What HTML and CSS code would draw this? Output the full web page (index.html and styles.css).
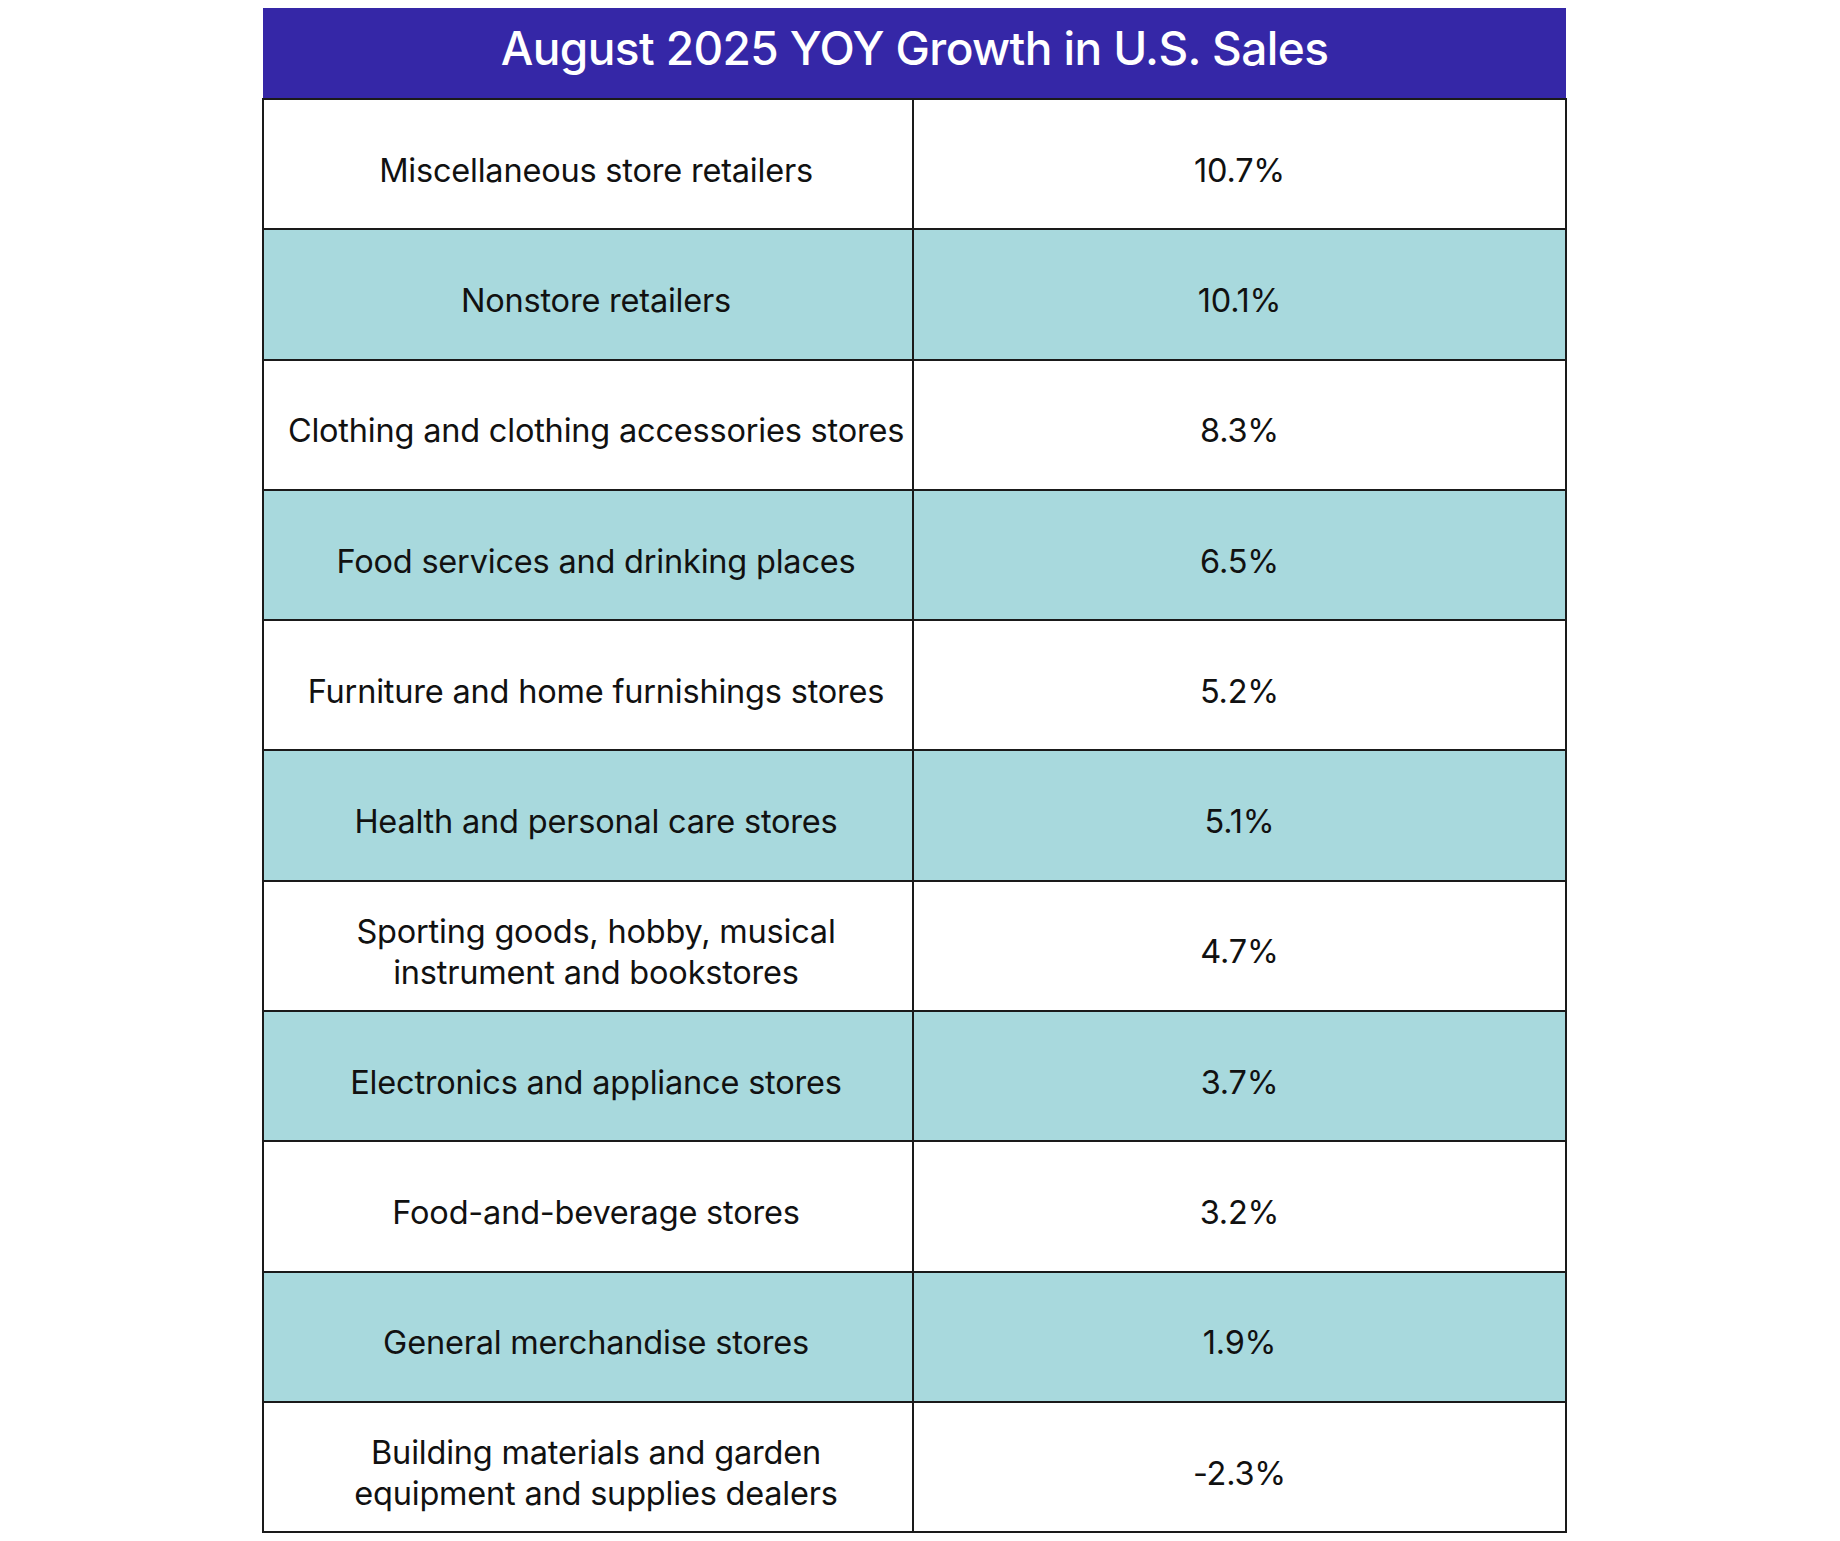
FILE: index.html
```html
<!DOCTYPE html>
<html lang="en">
<head>
<meta charset="utf-8">
<title>August 2025 YOY Growth in U.S. Sales</title>
<link rel="stylesheet" href="styles.css">
</head>
<body>
<div class="page">
  <table class="sales">
    <colgroup>
      <col class="col-label">
      <col class="col-value">
    </colgroup>
    <thead>
      <tr><th class="title" colspan="2">August 2025 YOY Growth in U.S. Sales</th></tr>
    </thead>
    <tbody>
      <tr><td class="label">Miscellaneous store retailers</td><td class="value">10.7%</td></tr>
      <tr class="alt"><td class="label">Nonstore retailers</td><td class="value">10.1%</td></tr>
      <tr><td class="label">Clothing and clothing accessories stores</td><td class="value">8.3%</td></tr>
      <tr class="alt"><td class="label">Food services and drinking places</td><td class="value">6.5%</td></tr>
      <tr><td class="label">Furniture and home furnishings stores</td><td class="value">5.2%</td></tr>
      <tr class="alt"><td class="label">Health and personal care stores</td><td class="value">5.1%</td></tr>
      <tr><td class="label">Sporting goods, hobby, musical<br>instrument and bookstores</td><td class="value">4.7%</td></tr>
      <tr class="alt"><td class="label">Electronics and appliance stores</td><td class="value">3.7%</td></tr>
      <tr><td class="label">Food-and-beverage stores</td><td class="value">3.2%</td></tr>
      <tr class="alt"><td class="label">General merchandise stores</td><td class="value">1.9%</td></tr>
      <tr><td class="label">Building materials and garden<br>equipment and supplies dealers</td><td class="value">-2.3%</td></tr>
    </tbody>
  </table>
</div>
</body>
</html>
```
FILE: styles.css
```css
html, body {
  margin: 0;
  padding: 0;
  background: #ffffff;
}
.page {
  padding: 8px 0 0 262px;
}
.sales {
  border-collapse: collapse;
  table-layout: fixed;
  width: 1303px;
  font-family: Inter, "Noto Sans", sans-serif;
  color: #111111;
}
.col-label {
  width: 650px;
}
.col-value {
  width: 653px;
}
.title {
  background: #3527a7;
  color: #ffffff;
  font-weight: 500;
  font-size: 46px;
  height: 91px;
  padding: 0 0 10px 0;
  box-sizing: border-box;
  text-align: center;
  vertical-align: middle;
  letter-spacing: -0.6px;
  border: none;
  border-bottom: 2px solid #1a1a1a;
}
.sales td {
  border: 2px solid #1a1a1a;
  height: 130.3px;
  padding: 12px 0 0 0;
  box-sizing: border-box;
  text-align: center;
  vertical-align: middle;
  font-size: 32.5px;
  line-height: 41px;
  letter-spacing: -0.2px;
}
.sales td.label {
  padding: 12px 4px 0 20px;
  white-space: nowrap;
}
.sales tr.alt td {
  background: #a8d9dd;
}
```
